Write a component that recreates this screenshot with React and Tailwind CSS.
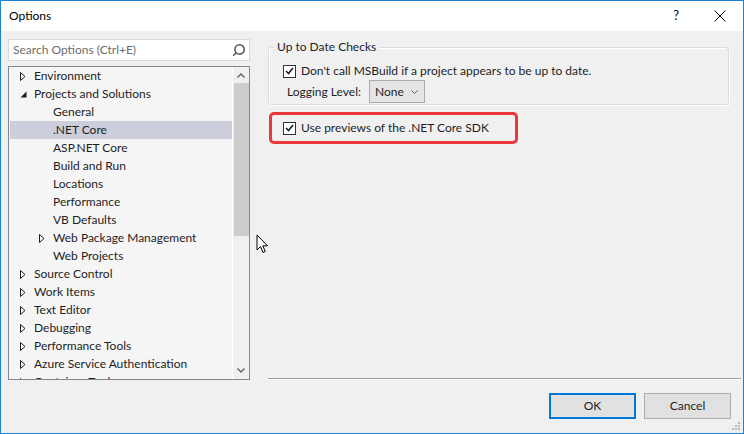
import { Search } from 'lucide-react'

const tree = [
  { label: 'Environment', level: 0, arrow: 'closed' },
  { label: 'Projects and Solutions', level: 0, arrow: 'open' },
  { label: 'General', level: 1 },
  { label: '.NET Core', level: 1, selected: true },
  { label: 'ASP.NET Core', level: 1 },
  { label: 'Build and Run', level: 1 },
  { label: 'Locations', level: 1 },
  { label: 'Performance', level: 1 },
  { label: 'VB Defaults', level: 1 },
  { label: 'Web Package Management', level: 1, arrow: 'closed' },
  { label: 'Web Projects', level: 1 },
  { label: 'Source Control', level: 0, arrow: 'closed' },
  { label: 'Work Items', level: 0, arrow: 'closed' },
  { label: 'Text Editor', level: 0, arrow: 'closed' },
  { label: 'Debugging', level: 0, arrow: 'closed' },
  { label: 'Performance Tools', level: 0, arrow: 'closed' },
  { label: 'Azure Service Authentication', level: 0, arrow: 'closed' },
  { label: 'Container Tools', level: 0, arrow: 'closed' },
]

function Arrow({ kind }) {
  if (kind === 'open') {
    return (
      <svg width="7" height="7" viewBox="0 0 7 7">
        <path d="M6.5 0.5 V6.5 H0.5 Z" fill="#1e1e1e" />
      </svg>
    )
  }
  return (
    <svg width="6" height="9" viewBox="0 0 6 9">
      <path d="M0.5 0.5 L5 4.5 L0.5 8.5 Z" fill="none" stroke="#1e1e1e" strokeWidth="1" />
    </svg>
  )
}

function Checkbox() {
  return (
    <div className="w-[13px] h-[13px] bg-white border border-[#333333] flex items-center justify-center shrink-0">
      <svg width="9" height="8" viewBox="0 0 9 8">
        <path d="M1 4 L3.5 6.5 L8 1" fill="none" stroke="#1e1e1e" strokeWidth="1.6" />
      </svg>
    </div>
  )
}

function TreeRow({ item }) {
  return (
    <div className={`h-[18px] flex items-center ${item.selected ? 'bg-[#cccedb]' : ''}`}>
      <div className={`${item.level === 0 ? 'w-[24px] pl-[10px]' : 'w-[43px] pl-[29px]'} flex items-center shrink-0`}>
        {item.arrow && <Arrow kind={item.arrow} />}
      </div>
      <span className="whitespace-nowrap">{item.label}</span>
    </div>
  )
}

export default function App() {
  return (
    <div className="w-[744px] h-[434px] border border-[#1883d7] flex flex-col font-['Segoe_UI','Lato',sans-serif] text-[12px] text-[#1e1e1e] relative overflow-hidden">
      {/* title bar */}
      <div className="h-[30px] bg-white flex items-center shrink-0">
        <span className="ml-[8px] text-[12px] text-black">Options</span>
        <span className="ml-auto text-[13px] text-black mr-[35px]">?</span>
        <svg className="mr-[17px]" width="12" height="12" viewBox="0 0 12 12">
          <path d="M0.5 0.5 L11.5 11.5 M11.5 0.5 L0.5 11.5" stroke="#000" strokeWidth="1" />
        </svg>
      </div>

      <div className="flex-1 bg-[#f0f0f0] flex">
        {/* left column */}
        <div className="w-[242px] ml-[7px] pt-[8px] flex flex-col">
          <div className="h-[22px] bg-white border border-[#d9d9d9] flex items-center pl-[4px] pr-[3px]">
            <span className="text-[#6d6d6d]">Search Options (Ctrl+E)</span>
            <Search className="ml-auto -scale-x-100" size={14} strokeWidth={2.6} color="#555" />
          </div>
          <div className="mt-[5px] h-[314px] border border-[#828790] bg-[#f5f5f5] flex overflow-hidden">
            <div className="flex-1 pl-[1px] overflow-hidden">
              {tree.map(item => (
                <TreeRow key={item.label} item={item} />
              ))}
            </div>
            <div className="w-[17px] border-l border-white bg-[#f0f0f0] flex flex-col items-center">
              <svg className="mt-[6px]" width="8" height="5" viewBox="0 0 8 5">
                <path d="M0.5 4.5 L4 1 L7.5 4.5" fill="none" stroke="#606060" strokeWidth="1.4" />
              </svg>
              <div className="mt-[5px] w-[15px] h-[153px] bg-[#cdcdcd]" />
              <svg className="mt-auto mb-[6px]" width="8" height="5" viewBox="0 0 8 5">
                <path d="M0.5 0.5 L4 4 L7.5 0.5" fill="none" stroke="#606060" strokeWidth="1.4" />
              </svg>
            </div>
          </div>
        </div>

        {/* right column */}
        <div className="flex-1 ml-[18px] mr-[2px] pt-[16px] flex flex-col">
          <div className="relative h-[58px] mr-[12px] border border-[#dcdcdc] rounded-[3px] shadow-[inset_1px_1px_0_#ffffff,1px_1px_0_#ffffff] pl-[14px]">
            <span className="absolute -top-[9px] left-[5px] px-[3px] bg-[#f0f0f0] leading-[16px]">Up to Date Checks</span>
            <div className="mt-[16px] flex items-center gap-[5px]">
              <Checkbox />
              <span className="leading-[14px]">Don't call MSBuild if a project appears to be up to date.</span>
            </div>
            <div className="mt-[2px] flex items-center">
              <span className="ml-[4px]">Logging Level:</span>
              <div className="ml-[8px] h-[23px] w-[56px] border border-[#acacac] bg-[#e5e5e5] flex items-center pl-[5px]">
                <span>None</span>
                <svg className="ml-auto mr-[6px]" width="7" height="4" viewBox="0 0 7 4">
                  <path d="M0.5 0.5 L3.5 3.5 L6.5 0.5" fill="none" stroke="#606060" strokeWidth="1" />
                </svg>
              </div>
            </div>
          </div>

          <div className="mt-[7px] h-[32px] w-[249px] ml-[1px] border-[3px] border-[#e8383c] rounded-[5px] flex items-center pl-[11px] gap-[5px]">
            <Checkbox />
            <span>Use previews of the .NET Core SDK</span>
          </div>

          <div className="flex-1" />
          <div className="h-[2px] border-t border-[#a0a0a0] bg-white" />
          <div className="mt-[13px] mb-[14px] flex justify-end gap-[8px] mr-[10px]">
            <button className="w-[87px] h-[26px] bg-[#e1e1e1] border-2 border-[#0078d7] text-[#1e1e1e]">OK</button>
            <button className="w-[87px] h-[26px] bg-[#e1e1e1] border border-[#adadad] text-[#1e1e1e]">Cancel</button>
          </div>
        </div>
      </div>

      {/* mouse cursor */}
      <svg className="absolute left-[255px] top-[233px]" width="13" height="20" viewBox="0 0 13 20">
        <path d="M1 1 V16 L4.5 12.5 L7 18.5 L9.3 17.5 L6.8 11.8 L11.5 11.8 Z" fill="#ffffff" stroke="#000" strokeWidth="1" strokeLinejoin="miter" />
      </svg>

      {/* size grip */}
      <svg className="absolute right-[2px] bottom-[2px]" width="9" height="9" viewBox="0 0 9 9">
        <rect x="6" y="0" width="2" height="2" fill="#b8b8b8" />
        <rect x="3" y="3" width="2" height="2" fill="#b8b8b8" />
        <rect x="6" y="3" width="2" height="2" fill="#b8b8b8" />
        <rect x="0" y="6" width="2" height="2" fill="#b8b8b8" />
        <rect x="3" y="6" width="2" height="2" fill="#b8b8b8" />
        <rect x="6" y="6" width="2" height="2" fill="#b8b8b8" />
      </svg>
    </div>
  )
}
